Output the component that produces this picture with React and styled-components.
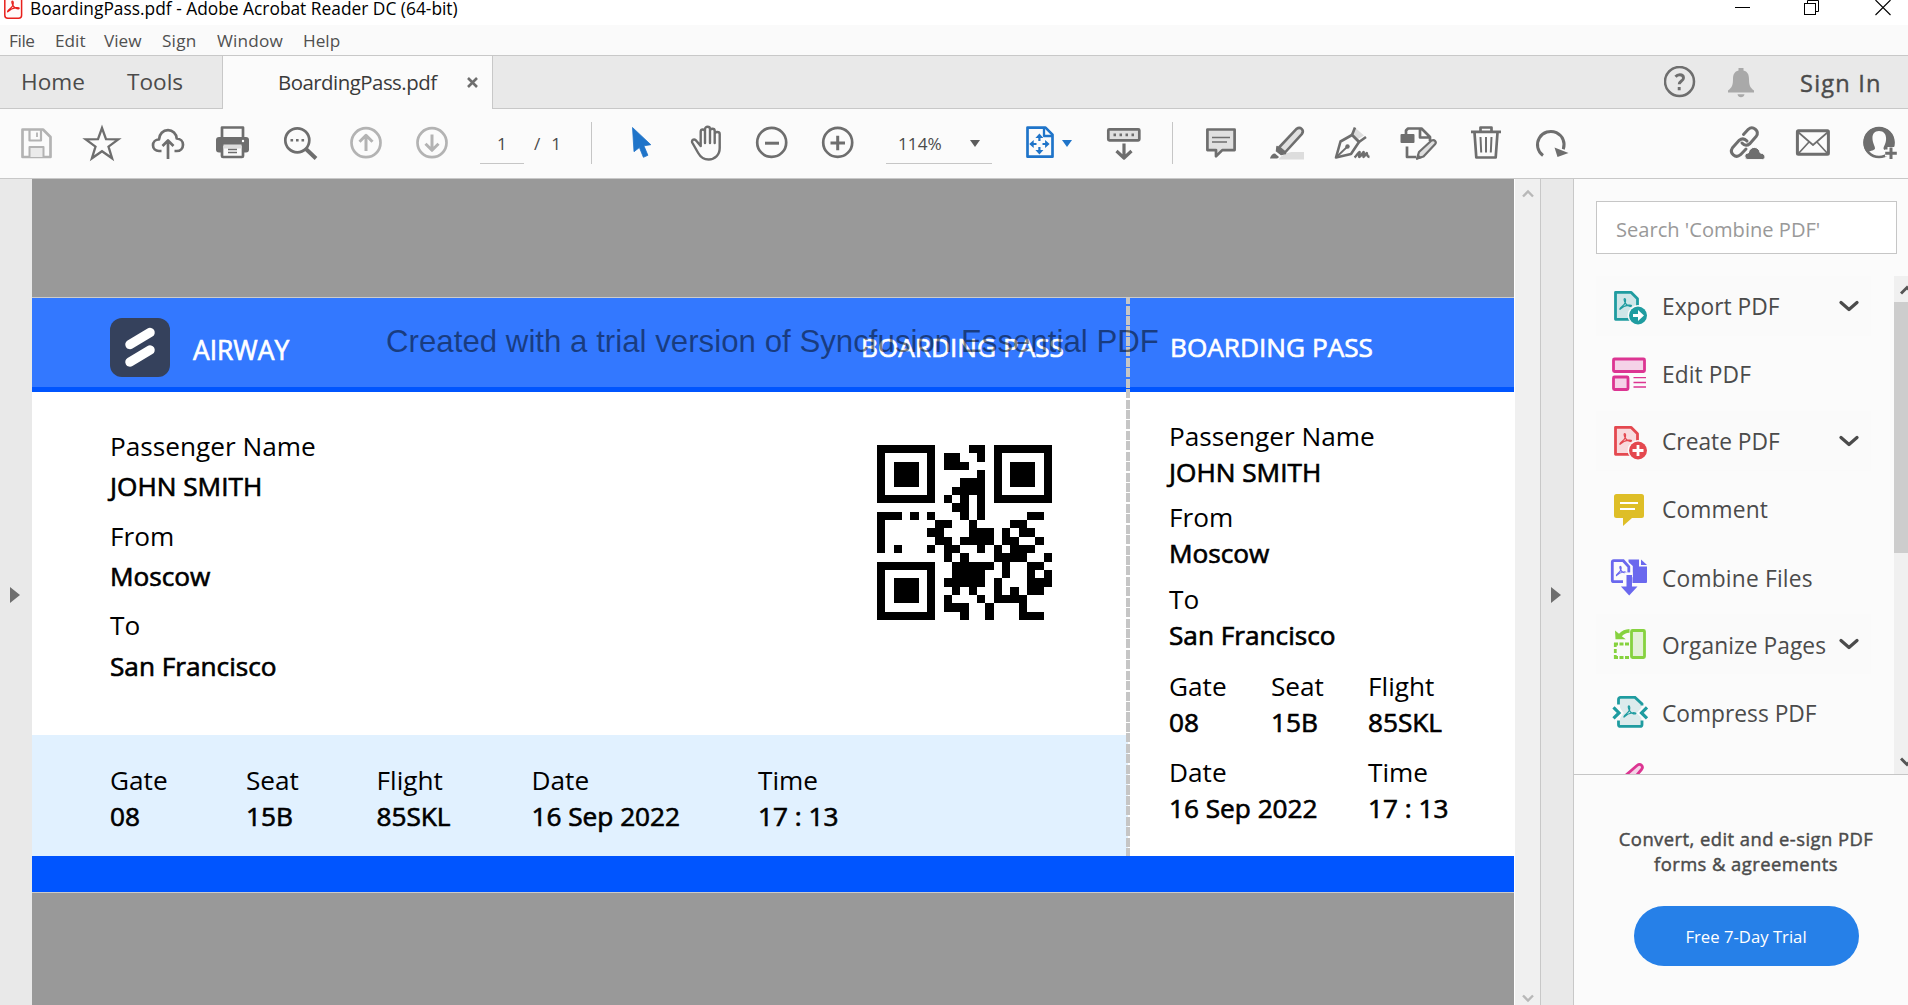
import React from 'react';
import styled, { createGlobalStyle } from 'styled-components';

const Global = createGlobalStyle`
  html, body { margin: 0; padding: 0; overflow: hidden; }
  * { box-sizing: border-box; }
  body { font-family: "Open Sans", "Noto Sans", sans-serif; color: #4b4b4b; background: #fbfbfb; }
  svg { display: block; flex: none; }
`;

const Window = styled.div`
  width: 1908px; height: 1005px; overflow: hidden;
  display: flex; flex-direction: column; background: #fbfbfb;
`;

/* ---------- title + menu ---------- */
const TitleBar = styled.header`
  height: 25px; flex: none; background: #fff; display: flex; align-items: flex-start;
  padding: 0 17px 0 4px;
`;
const TitleText = styled.div`
  margin-left: 7px; font-size: 17.35px; line-height: 16px; color: #000; white-space: nowrap; flex: 1;
`;
const Controls = styled.div`display: flex; gap: 55px;`;
const MenuBar = styled.nav`
  height: 31px; flex: none; background: #fafafa; border-bottom: 1px solid #c8c8c8;
  display: flex; align-items: center; padding-left: 9px; color: #505050;
`;
const MenuItem = styled.span`
  width: ${p => p.$w}px; font-size: 17.2px; line-height: 30px; padding-top: 1px; letter-spacing: ${p => p.$ls || 0}px; white-space: nowrap;
`;

/* ---------- tabs ---------- */
const TabBar = styled.div`
  height: 53px; flex: none; display: flex; background: #e9e9e9;
`;
const TabGroup = styled.div`
  width: 222px; border-bottom: 1px solid #c8c8c8; display: flex; align-items: center; padding-left: 21px;
`;
const TabName = styled.span`
  width: ${p => p.$w}px; font-size: 22.6px; line-height: 50px; padding-bottom: 1px; white-space: nowrap;
`;
const ActiveTab = styled.div`
  width: 271px; background: #fbfbfb; border: solid #c8c8c8; border-width: 0 1px;
  display: flex; align-items: center; padding: 0 14px 1px 55px; justify-content: space-between;
  font-size: 20.4px; letter-spacing: -0.5px; color: #3a3a3a; white-space: nowrap;
`;
const TabRest = styled.div`
  flex: 1; border-bottom: 1px solid #c8c8c8; display: flex; align-items: center; justify-content: flex-end;
  padding-right: 27px;
`;
const SignIn = styled.span`
  width: 82px; margin-left: 45px; padding-left: 1px; font-size: 23.6px; letter-spacing: 1.2px; white-space: nowrap; color: #4b4b4b;
  line-height: 50px; padding-top: 1px; -webkit-text-stroke: 0.4px currentColor;
`;
const BellSlot = styled.div`margin-left: 32px; padding-top: 2px;`;

/* ---------- toolbar ---------- */
const Toolbar = styled.div`
  height: 70px; flex: none; background: #fbfbfb; border-bottom: 1px solid #c8c8c8;
  display: flex; align-items: flex-start; padding: 13px 8px 0 16px; color: #6e6e6e;
`;
const Tool = styled.svg.attrs({ width: 40, height: 40, viewBox: '0 0 40 40', fill: 'none' })`
  margin: 1px 0 0 ${p => p.$ml || 0}px;
  stroke-linejoin: round; color: ${p => p.$c || '#6e6e6e'}; stroke: currentColor; stroke-width: 2.7;
`;
const Field = styled.div`
  width: ${p => p.$w}px; height: 42px; margin-left: ${p => p.$ml}px; border-bottom: 1px solid #c6c6c6;
  display: flex; align-items: center; justify-content: ${p => p.$j || 'center'}; padding: ${p => p.$pad || '2px 0 0'};
  font-size: 17.2px; line-height: 40px; color: #4b4b4b;
`;
const PageTotal = styled.span`
  width: 57px; padding: 1px 0 0 10px; font-size: 17.2px; line-height: 42px; word-spacing: 6.5px; color: #4b4b4b;
`;
const Rule = styled.div`width: 1px; height: 42px; background: #c6c6c6; margin-left: ${p => p.$ml}px;`;
const Caret = styled.span`
  border: solid transparent; border-width: 7px 5px 0; border-top-color: ${p => p.$c}; margin: ${p => p.$m || 0};
`;
const Spacer = styled.div`flex: 1;`;

/* ---------- work area ---------- */
const Work = styled.main`flex: 1; min-height: 0; display: flex;`;
const SideHandle = styled.div`
  width: ${p => p.$w}px; flex: none; background: #e9e9e9; display: flex; align-items: flex-start;
  padding: 408px 0 0 ${p => p.$pl}px;
  border: solid #c8c8c8; border-width: ${p => (p.$lined ? '0 1px' : '0')};
`;
const Triangle = styled.span`border: solid transparent; border-width: 8px 0 8px 10px; border-left-color: #6e6e6e;`;
const DocView = styled.section`
  width: 1482px; flex: none; background: #999; padding-top: 118px; overflow: hidden;
`;
const ScrollTrack = styled.div`
  width: 26px; flex: none; background: #f0f0f0; border-left: 1px solid #fff;
  display: flex; flex-direction: column; justify-content: space-between; align-items: center; padding: 10px 0 2px;
`;

/* ---------- boarding pass ---------- */
const Pass = styled.article`
  position: relative; height: 596px; border: solid #ccc; border-width: 1px 0;
  display: flex; flex-direction: column; background: #fff; color: #000;
`;
const PassHead = styled.div`
  height: 94px; flex: none; background: #3378ff; border-bottom: 5px solid #0055ff; display: flex; align-items: flex-start;
  color: #fff; padding: 20px 0 0 78px;
`;
const Emph = styled.span`
  -webkit-text-stroke: 0.65px currentColor; white-space: nowrap;
`;
const Brand = styled(Emph)`
  width: 691px; padding-left: 23px; font-size: 26.4px; line-height: 65px;
`;
const HeadTitle = styled(Emph)`
  width: ${p => p.$w}px; font-size: 26.2px; line-height: 58px;
`;
const Watermark = styled.div`
  position: absolute; left: 354px; top: 24px; font: 31.25px/40px "Liberation Sans", Arial, sans-serif;
  color: rgba(0, 0, 0, 0.5); white-space: nowrap;
`;
const Perforation = styled.div`
  position: absolute; left: 1094px; top: 0; width: 4px; height: 558px;
  background: repeating-linear-gradient(to bottom, #c6c6c6 0 9.1px, transparent 9.1px 10.43px) 0 -2.8px / 100% 600px no-repeat;
`;
const PassBody = styled.div`flex: 1; min-height: 0; display: flex;`;
const MainPart = styled.div`width: 1096px; display: flex; flex-direction: column;`;
const MainTop = styled.div`
  height: 343px; display: flex; justify-content: space-between; padding: 34px 76px 0 78px;
`;
const Stub = styled.div`flex: 1; padding: 25.7px 0 0 41px;`;
const Group = styled.div`
  width: ${p => p.$w ? p.$w + 'px' : 'auto'};
  margin-bottom: ${p => p.$mb || 0}px; font-size: 26.2px; white-space: nowrap;
`;
const Label = styled.div`line-height: ${p => p.$lh || 36}px;`;
const Value = styled(Emph)`display: block; line-height: ${p => p.$lh || 36}px;`;
const Row = styled.div`display: flex; margin-bottom: ${p => p.$mb || 0}px;`;
const Strip = styled.div`
  flex: 1; background: #e1f1ff; display: flex; padding: 27px 0 0 78px;
`;
const PassFoot = styled.div`height: 36px; flex: none; background: #0055ff;`;
const QrSlot = styled.div`margin-top: 19px;`;

const F = ({ l, v, w, mb, a, b }) => (
  <Group $w={w} $mb={mb}><Label $lh={a}>{l}</Label><Value $lh={b}>{v}</Value></Group>
);

const QR = [
  '111111100001101111111',
  '100000101100101000001',
  '101110101110001011101',
  '101110100000101011101',
  '101110100011101011101',
  '100000100111101000001',
  '111111101010101111111',
  '000000000110100000000',
  '111010100010100000110',
  '100000011001000011000',
  '100000110001110101100',
  '100000011011110110010',
  '101000101100101011100',
  '000000001010001111001',
  '111111100111110100110',
  '100000100111100100101',
  '101110101111101000111',
  '101110100101001010110',
  '101110101000101111000',
  '100000101110010001000',
  '111111100010010001110',
];
const QrCode = () => (
  <svg width="175" height="175" viewBox="0 0 21 21" shapeRendering="crispEdges">
    {QR.map((r, y) => [...r].map((c, x) => c === '1' && <rect key={x + '-' + y} x={x} y={y} width="1" height="1" />))}
  </svg>
);

/* ---------- tools panel ---------- */
const Panel = styled.aside`flex: 1; min-width: 0; display: flex; flex-direction: column; background: #fbfbfb;`;
const Search = styled.div`
  margin: 22px 11px 22px 22px; height: 53px; flex: none; background: #fff; border: 1px solid #c6c6c6;
  padding-left: 19px; font-size: 20.1px; line-height: 55px; color: #999; white-space: nowrap;
`;
const ListArea = styled.div`
  height: 499px; flex: none; display: flex; overflow: hidden; border-bottom: 1px solid #c6c6c6; padding-left: 22px;
`;
const List = styled.div`width: 298px; flex: none; display: flex; flex-direction: column; gap: 7.7px;`;
const Item = styled.div`
  width: 275px; height: 60px; flex: none; display: flex; align-items: center; padding-left: 14px;
  background: ${p => (p.$open ? '#fafafa' : 'transparent')};
  font-size: 22.75px; white-space: nowrap;
`;
const ItemName = styled.span`
  width: 177px; margin-left: 12px; height: 60px; line-height: 60px;
  padding-top: ${p => p.$drop}px; letter-spacing: ${p => p.$ls || 0}px;
`;
const ListScroll = styled.div`width: 14px; flex: none; background: #f0f0f0; display: flex; flex-direction: column; overflow: hidden;`;
const Thumb = styled.div`height: 251px; background: #cdcdcd; margin: 0 0 auto;`;
const ScrollBtn = styled.div`height: 26px; flex: none; padding: ${p => p.$pt}px 0 0 6px;`;
const Promo = styled.div`
  flex: 1; display: flex; flex-direction: column; align-items: center; padding: 51px 4px 0 14px; text-align: center;
`;
const PromoText = styled.p`
  margin: 0; font-size: 18.4px; line-height: 25px; letter-spacing: 0.45px; white-space: pre;
  -webkit-text-stroke: 0.45px currentColor;
`;
const Trial = styled.button`
  margin: 30px 0 0; width: 225px; height: 60px; border: 0; border-radius: 30px; background: #2680e8; color: #fff;
  font: 16.7px/60px "Open Sans", sans-serif; padding: 1px 0 0;
`;

const Ico = ({ children, dy = 0 }) => <svg width="40" height="40" viewBox={`0 ${-dy} 40 40`} fill="none">{children}</svg>;
const A = ({ c, x = 0, y = 0, s = 1 }) => (
  <path transform={`translate(${x} ${y}) scale(${s})`} stroke={c} strokeWidth={1.2 / s} strokeLinejoin="round"
    d="M0.5 11.5C-0.5 10 4.500 8 6 4.500C6.600 2.500 6.500 0 5.500 0S4.800 2.500 6 4.500C7 7 10.500 8.500 12 8.200C13.500 7.500 12 6.800 9.500 7C5 7.500 2.500 9.500 .5 11.500Z" />
);
const PageBadge = ({ c, f, children }) => (
  <Ico>
    <path d="M5.500 6.300h15.500l6.500 6.500v20.500h-22z" fill={f} stroke={c} strokeWidth="2.800" strokeLinejoin="round" />
    <A c={c} x={9.5} y={12.5} s={0.95} />
    <circle cx="28" cy="29.500" r="10.400" fill="#fbfbfb" />
    <circle cx="28" cy="29.500" r="9" fill={c} />
    {children}
  </Ico>
);
const Chevron = () => (
  <svg width="20" height="12" viewBox="0 0 20 12" fill="none" stroke="#4b4b4b" strokeWidth="3.200"><path d="M2 2.500l8 7 8-7" strokeLinecap="round" strokeLinejoin="round" /></svg>
);

const icons = {
  exp: <PageBadge c="#1f9ca0" f="#cfe6e8"><path d="M23 28h5v-4l6 5.500-6 5.500v-4h-5z" fill="#fff" /></PageBadge>,
  edit: <Ico><g stroke="#dc3592" fill="#f5d3e8" strokeWidth="2.800" strokeLinejoin="round"><rect x="3.500" y="5" width="31" height="12.500" rx="1" /><rect x="3.500" y="23" width="14.500" height="12.500" rx="1" /></g><path d="M23.500 23.700H36M23.500 28.500H36M23.500 33H36" stroke="#dc3592" strokeWidth="1.300" /></Ico>,
  create: <PageBadge c="#e4484f" f="#f8dadd"><path d="M28 24v11M22.500 29.500h11" stroke="#fff" strokeWidth="2.800" /></PageBadge>,
  comment: <Ico><path d="M6.500 5h25a2.500 2.500 0 0 1 2.500 2.500v19a2.500 2.500 0 0 1-2.500 2.500h-9.500l-9 8v-8h-6.500a2.500 2.500 0 0 1-2.500-2.500v-19a2.500 2.500 0 0 1 2.500-2.500z" fill="#debe27" /><path d="M10 14h18M10 20h15" stroke="#fff" strokeWidth="2.200" /></Ico>,
  combine: <Ico dy={-1.6}><path d="M18.500 4H29v7h8v15.500a1 1 0 0 1-1 1H18.500z" fill="#6a68ee" /><path d="M31 4l6 5.500h-6z" fill="#6a68ee" /><path d="M12 26.300H4.300a2 2 0 0 1-2-2V6.800a1.500 1.500 0 0 1 1.500-1.500h9.500l7 6.500v10" stroke="#fbfbfb" strokeWidth="5" fill="#fbfbfb" /><path d="M13 26.300H3.800a1.500 1.500 0 0 1-1.500-1.500V6.800a1.500 1.500 0 0 1 1.500-1.500h9.500l5.500 6v8" stroke="#6a68ee" strokeWidth="2.800" fill="#fbfbfb" /><A c="#6a68ee" x={6} y={11} s={0.8} /><path d="M14.500 17h8v18h-8z" fill="#fbfbfb" /><path d="M16.500 19.500h5.500v11.500h5.500l-8.300 9-8.300-9h5.600z" fill="#6a68ee" /></Ico>,
  organize: <Ico><rect x="21.500" y="6.500" width="13" height="27" rx="1" fill="#e3f1d6" stroke="#86d23f" strokeWidth="2.800" /><path d="M5 6.500l4 3.200c3-3 6-4.500 10.500-4.700v3.800c-3.500.3-5.500 1.200-7.700 3.500l4 3H5.500z" fill="#86d23f" /><path d="M4 20h15M4 33.500h15" stroke="#86d23f" strokeWidth="2.800" strokeDasharray="4 1.500" /><path d="M5.300 19v16" stroke="#86d23f" strokeWidth="2.800" strokeDasharray="4 2" /></Ico>,
  compress: <Ico dy={0.4}><path d="M10 6.500h14.500l7 6v20h-21.500V26l3-5.500-3-5.500z" fill="#dcebec" /><path d="M8.500 12V7a2 2 0 0 1 2-2h14.500l7 6.500v1.500M8.500 28v4a2 2 0 0 0 2 2h19.500a2 2 0 0 0 2-2v-4" stroke="#1f9ca0" strokeWidth="2.800" /><path d="M3.500 15l5.500 5.500L3.500 26M37 15l-5.500 5.500L37 26" stroke="#fbfbfb" strokeWidth="7" /><path d="M3.500 15l5.500 5.500L3.500 26M37 15l-5.500 5.500L37 26" stroke="#1f9ca0" strokeWidth="3.200" /><A c="#1f9ca0" x={13.5} y={13.5} s={0.98} /></Ico>,
  redact: <Ico><path d="M15.500 15.500l11.500-10c3.500-2.800 7 .8 4.500 4L21 22z" fill="#f5d3e8" stroke="#dc3592" strokeWidth="2.800" /></Ico>,
};
const items = [
  { k: 'exp', name: 'Export PDF', open: true, drop: 1 },
  { k: 'edit', name: 'Edit PDF', drop: 1, ls: 0.1 },
  { k: 'create', name: 'Create PDF', open: true, drop: 1 },
  { k: 'comment', name: 'Comment', drop: 1, ls: 0.15 },
  { k: 'combine', name: 'Combine Files', drop: 2, ls: 0.2 },
  { k: 'organize', name: 'Organize Pages', open: true, drop: 2, ls: 0.05 },
  { k: 'compress', name: 'Compress PDF', drop: 2 },
  { k: 'redact', name: 'Redact', drop: 4 },
];

export default function App() {
  return (
    <Window>
      <Global />
      <TitleBar>
        <svg width="19" height="20" viewBox="0 0 19 20" fill="none" stroke="#e8201c">
          <rect x="0.8" y="-3" width="16.800" height="21.200" rx="3" strokeWidth="1.500" fill="#fffafa" />
          <A c="#e8201c" x={3.2} y={1} s={0.95} />
        </svg>
        <TitleText>BoardingPass.pdf - Adobe Acrobat Reader DC (64-bit)</TitleText>
        <Controls>
          <svg width="15" height="16" viewBox="0 0 15 16" overflow="visible"><rect x="1" y="7" width="15" height="1" /></svg>
          <svg width="16" height="16" viewBox="0 0 16 16" fill="none" stroke="#000"><rect x="0.500" y="3.500" width="11" height="11" /><path d="M3.500 3V.5h11v11H12" /></svg>
          <svg width="16" height="16" viewBox="0 0 16 16" stroke="#000" strokeWidth="1.100"><path d="M.5 0l15 15M15.500 0l-15 15" /></svg>
        </Controls>
      </TitleBar>
      <MenuBar>
        <MenuItem $w={46} $ls={-0.4}>File</MenuItem><MenuItem $w={49}>Edit</MenuItem><MenuItem $w={58}>View</MenuItem>
        <MenuItem $w={55} $ls={0.2}>Sign</MenuItem><MenuItem $w={86} $ls={0.2}>Window</MenuItem><MenuItem $w={50}>Help</MenuItem>
      </MenuBar>
      <TabBar>
        <TabGroup><TabName $w={106}>Home</TabName><TabName $w={80}>Tools</TabName></TabGroup>
        <ActiveTab>
          BoardingPass.pdf
          <svg width="11" height="11" viewBox="0 0 11 11" stroke="#6e6e6e" strokeWidth="2.600"><path d="M1 1l9 9M10 1l-9 9" /></svg>
        </ActiveTab>
        <TabRest>
          <svg width="32" height="32" viewBox="0 0 32 32" fill="none" stroke="#6e6e6e" strokeWidth="2.500">
            <circle cx="15.500" cy="15.500" r="14.500" />
            <path d="M11.500 10.800c1.500-1.800 3-2 4.300-2 2.200 0 3.700 1.300 3.700 3.100 0 3.100-4.300 3.100-4.300 6.400M15.200 21v3.200" strokeWidth="2.900" />
          </svg>
          <BellSlot>
            <svg width="26" height="30" viewBox="0 0 26 30" fill="#a9a9a9">
              <path d="M10.500 0h5v2.500c4 1 5.500 4 5.500 8.500 0 6 1 8.500 5 11.500v2H0v-2c4-3 5-5.500 5-11.500 0-4.500 1.500-7.500 5.500-8.500zM9.500 26.300h7c-.3 1.800-1.700 2.900-3.500 2.900s-3.200-1.100-3.500-2.900z" />
            </svg>
          </BellSlot>
          <SignIn>Sign In</SignIn>
        </TabRest>
      </TabBar>

      <Toolbar>
        <Tool $c="#b3b3b3"><path d="M6.500 6.500H27l7.500 7.500v20H6.500z" /><path d="M13.500 7v10.500h11.500V7" strokeWidth="2.200" /><path d="M13.500 34V24h14v10" fill="#ebebeb" strokeWidth="2" /><path d="M21 9.500v4.500" strokeWidth="1.800" /></Tool>
        <Tool $ml={26}><path d="M20 5.500l4 11.200 12.300.2-9.800 7.300 3.600 11.600L20 28.700l-10.100 7.100 3.600-11.600-9.800-7.300 12.300-.2z" transform="translate(0 -.5)" strokeWidth="2.300" strokeLinejoin="miter" /></Tool>
        <Tool $ml={26}><path d="M13.500 28h-2.500c-3.500 0-6-2.500-6-5.700 0-3.300 2.500-5.800 6-5.800.3-5.500 4-9.300 9-9.300 4.700 0 8.300 3.500 8.700 8.300 3.700.2 6.300 2.700 6.300 6.200 0 3.600-2.700 6.300-6.300 6.300h-2.200" /><path d="M20 36V18M14.500 23l5.500-5.500 5.500 5.500" /></Tool>
        <Tool $ml={25}>
          <rect x="3" y="14" width="33" height="15.500" rx="3" fill="currentColor" stroke="none" />
          <path d="M9 14V4.500h21V14" /><rect x="9" y="21.500" width="21" height="12.500" rx="1" fill="#fbfbfb" /><rect x="10.500" y="21.500" width="18" height="4" fill="#ddd" stroke="none" />
          <path d="M15 26.500h9M15 29.500h9" strokeWidth="1.500" /><circle cx="30" cy="18" r="1.200" fill="#fff" stroke="none" />
        </Tool>
        <Tool $ml={28}><circle cx="16.300" cy="17.300" r="12" /><path d="M25 26l10 9.500" strokeWidth="4" /><path d="M9.500 17.300h2.600M15 17.300h2.600M20.500 17.300h2.600" strokeWidth="2.600" /></Tool>
        <Tool $ml={25} $c="#b3b3b3"><circle cx="20" cy="19.700" r="14.500" /><path d="M20 28V12.500M13.500 18.800l6.500-6.500 6.500 6.500" strokeWidth="3" /></Tool>
        <Tool $ml={26} $c="#b3b3b3"><circle cx="20" cy="19.700" r="14.500" /><path d="M20 11.500V27M13.500 20.800l6.500 6.500 6.500-6.500" strokeWidth="3" /></Tool>
        <Field $w={44} $ml={28}>1</Field>
        <PageTotal>/ 1</PageTotal>
        <Rule $ml={10} />
        <Tool $ml={30} $c="#1f74c9"><path d="M11 5l18.300 17.200-6.900 1.100 4 9.500-4.500 2-4-9.800-5.400 4.200z" transform="translate(-.5 -.5)" fill="currentColor" stroke="currentColor" strokeWidth="0.800" /></Tool>
        <Tool $ml={24} strokeLinecap="round"><path d="M12.500 23V8.800c0-3 4.300-3 4.300 0V20M16.800 8V6c0-3 5-3 5 0v14M21.800 8c0-3 4.700-3 4.700 0v12M26.500 11c0-2.600 5-2.600 5 0v14c0 7-5 11.500-11 11.500-5 0-8-2-10.500-6.500l-6-10.500c-1-3 2.500-4 4.300-1.500l4.200 5" transform="translate(2.200 0)" strokeWidth="2.400" /></Tool>
        <Tool $ml={26}><circle cx="19.700" cy="19.400" r="14.500" /><path d="M13 20.200h14" strokeWidth="3" /></Tool>
        <Tool $ml={26}><circle cx="19.700" cy="19.400" r="14.500" /><path d="M12.500 20h14.500M19.700 12.800v14.500" strokeWidth="3" /></Tool>
        <Field $w={106} $ml={28} $j="space-between" $pad="2px 12px 0 12px">114%<Caret $c="#5c5c5c" /></Field>
        <Tool $ml={28} $c="#1f74c9">
          <path d="M7.500 4.600H25.500l7 7V33.700H7.500z" /><path d="M24 5v8h8" strokeWidth="2.300" />
          <path d="M19.400 13.500v4.500M19.400 24v4.500M12 21h4.500M22.500 21h4.500" strokeWidth="2.200" />
          <path d="M19.400 10.500l4 4.500h-8zM19.400 31.500l4-4.500h-8zM9.200 21l4.500-4v8zM29.600 21l-4.500-4v8z" fill="currentColor" stroke="none" />
        </Tool>
        <Caret $c="#1f74c9" $m="18px 0 0 2px" />
        <Tool $ml={32}><rect x="4.300" y="6.300" width="31" height="11" rx="1" fill="#e0e0e0" /><path d="M9.500 11.800h2.500M15.500 11.800h2.500M21.500 11.800h2.500M27.500 11.800h2.500" strokeWidth="2.800" /><path d="M20 20.500v14M12.500 28l7.500 7 7.500-7" strokeWidth="3.200" /></Tool>
        <Rule $ml={28} />
        <Tool $ml={28}><path d="M6.400 6.500h27.200v20.600H21.300l-6.300 6.200v-6.200H6.400z" fill="#e0e0e0" /><path d="M11 14.500h18M11 19h15" strokeWidth="1.500" /></Tool>
        <Tool $ml={26}><path d="M11.500 36.500c3-5 10-7.500 14.500-7.500h11v7.500z" fill="#ddd" stroke="none" /><path d="M12 24.500L29.500 5.800c4-2.500 8 1 5.500 5L18 29.500z" fill="#e0e0e0" strokeWidth="2.600" /><path d="M10 23.500l8.500 7-4.500 1-4.500-3.500z" fill="currentColor" strokeWidth="1.500" /><path d="M3 35.500c.5-3 2.500-5 5-5l4 3.500c-1 1.500-1.500 1.500-3 1.500z" fill="currentColor" stroke="none" /></Tool>
        <Tool $ml={25}><path d="M23.500 5l8.500 7.500-6 3.500-5.500-5z" fill="#ddd" stroke="none" /><path d="M23 4.500L20 12l7 7 7-5" strokeWidth="2.600" /><path d="M20 12L8.500 18.500 4 34.500l15-3.500 8-12z" fill="#fbfbfb" strokeWidth="2.600" /><path d="M4.500 34L15 24" strokeWidth="1.800" /><circle cx="15.500" cy="23.500" r="2.200" fill="currentColor" stroke="none" /><path d="M22.500 34.500c2-1.500 4-5.500 5-5.500s-1.500 5 0 5 3-5 4-5-1 5 .2 5 2-4 3-4-.8 3.500 2.800 4" strokeWidth="2.300" /></Tool>
        <Tool $ml={27}><rect x="1.500" y="11" width="14" height="9" rx="1" fill="currentColor" stroke="none" /><path d="M7 11V7.500L9 5.500h13.500l8.500 8.500v4M21 6v8.500h9.500M8 23.500V34h9" /><path d="M18 35.500l2-6.500L32.500 17.500c3-1.500 5.500 1.500 3.500 3.800L24.500 33.500z" fill="#e0e0e0" strokeWidth="2.200" /><path d="M17 37l2-6 4 4z" fill="currentColor" stroke="none" /></Tool>
        <Tool $ml={27}><path d="M5 8.800h30M14.500 8V4.500h11V8M8.500 9.500l1.800 25h19.400l1.800-25" /><path d="M14.500 14l.7 15.500M20 14v15.500M25.500 14l-.7 15.500" strokeWidth="2" /></Tool>
        <Tool $ml={25}><path d="M12 32.300A13.300 13.300 0 1 1 32.300 26" transform="translate(0 .2)" strokeWidth="3" /><path d="M23.500 24.500l14 5.500-11 4z" fill="currentColor" stroke="none" /></Tool>
        <Spacer />
        <Tool strokeLinecap="round">
          <g strokeWidth="3"><path d="M17.500 11.500l4.800-5.200c4.500-4 11.500 1.500 8 7L24 20.500c-3 2.600-6 1.800-8-.5" /><path d="M20 26l-5.500 5.700c-5 4.300-11.500-1.500-8-7L13 17.500c3-2.500 6-1.700 8 .6" /></g>
          <path d="M20 37.500c-4-1-3.500-6.500.8-6.500 1.500-7.500 10.500-7.500 12 0 5.500.5 6 5.500 2.700 6.500z" transform="translate(1.500 -1)" fill="currentColor" stroke="#fbfbfb" strokeWidth="1" />
        </Tool>
        <Tool $ml={27}><rect x="4.400" y="7.800" width="31" height="23.500" rx="1" strokeWidth="3" /><path d="M5 9l15 13L35 9M5 31l11-12M35 31L24 19" strokeWidth="1.700" /></Tool>
        <Tool $ml={27}>
          <circle cx="19" cy="19.500" r="14.500" strokeWidth="2.500" /><path d="M19 8c-6 0-7.500 5-6 11 .8 3 2 4.500 2 6.500 0 1.500-4 2.200-8 4A15.500 15.500 0 1 1 30.500 30c-3.500-2-7-3-7-4.500 0-2 1.500-3.500 2.200-6.500C27 13 25 8 19 8z" fill="currentColor" stroke="none" />
          <path d="M31 24v12M25 30h12" stroke="#fbfbfb" strokeWidth="7" /><path d="M31 24.500v11.500M25.200 30.300h11.600" strokeWidth="3" />
        </Tool>
      </Toolbar>

      <Work>
        <SideHandle $w={32} $pl={10}><Triangle /></SideHandle>
        <DocView>
          <Pass>
            <PassHead>
              <svg width="60" height="59" viewBox="0 0 60 59"><rect width="60" height="59" rx="12" fill="#35415c" /><path d="M20 26.500L40 14.500M20 44L40 32" stroke="#fff" strokeWidth="9.500" strokeLinecap="round" /></svg>
              <Brand>AIRWAY</Brand>
              <HeadTitle $w={309}>BOARDING PASS</HeadTitle>
              <HeadTitle>BOARDING PASS</HeadTitle>
            </PassHead>
            <PassBody>
              <MainPart>
                <MainTop>
                  <div>
                    <F l="Passenger Name" v="JOHN SMITH" mb={8} a={40} b={41.5} />
                    <F l="From" v="Moscow" mb={8} a={40} b={41.5} />
                    <F l="To" v="San Francisco" a={40} b={42} />
                  </div>
                  <QrSlot><QrCode /></QrSlot>
                </MainTop>
                <Strip>
                  <F l="Gate" v="08" w={136} /><F l="Seat" v="15B" w={130.5} /><F l="Flight" v="85SKL" w={155} />
                  <F l="Date" v="16 Sep 2022" w={226.5} /><F l="Time" v="17 : 13" />
                </Strip>
              </MainPart>
              <Stub>
                <F l="Passenger Name" v="JOHN SMITH" mb={9.5} />
                <F l="From" v="Moscow" mb={9.5} />
                <F l="To" v="San Francisco" mb={15} />
                <Row $mb={14}><F l="Gate" v="08" w={102} /><F l="Seat" v="15B" w={97} /><F l="Flight" v="85SKL" /></Row>
                <Row><F l="Date" v="16 Sep 2022" w={199} /><F l="Time" v="17 : 13" /></Row>
              </Stub>
            </PassBody>
            <PassFoot />
            <Perforation />
            <Watermark>Created with a trial version of Syncfusion Essential PDF</Watermark>
          </Pass>
        </DocView>
        <ScrollTrack>
          <svg width="12" height="9" viewBox="0 0 12 9" fill="none" stroke="#b8b8b8" strokeWidth="2.400"><path d="M1 7.500l5-5 5 5" /></svg>
          <svg width="12" height="9" viewBox="0 0 12 9" fill="none" stroke="#b8b8b8" strokeWidth="2.400"><path d="M1 1.500l5 5 5-5" /></svg>
        </ScrollTrack>
        <SideHandle $w={34} $pl={10} $lined><Triangle /></SideHandle>
        <Panel>
          <Search>Search 'Combine PDF'</Search>
          <ListArea>
            <List>
              {items.map(({ k, name, open, drop, ls }) => (
                <Item key={k} $open={open}>{icons[k]}<ItemName $ls={ls} $drop={drop}>{name}</ItemName>{open && <Chevron />}</Item>
              ))}
            </List>
            <ListScroll>
              <ScrollBtn $pt={9}><svg width="14" height="10" viewBox="0 0 14 10" fill="none" stroke="#555" strokeWidth="3"><path d="M1 8.500l6-6 6 6" /></svg></ScrollBtn>
              <Thumb />
              <ScrollBtn $pt={9}><svg width="14" height="10" viewBox="0 0 14 10" fill="none" stroke="#555" strokeWidth="3"><path d="M1 1.500l6 6 6-6" /></svg></ScrollBtn>
            </ListScroll>
          </ListArea>
          <Promo>
            <PromoText>{'Convert, edit and e-sign PDF\nforms & agreements'}</PromoText>
            <Trial>Free 7-Day Trial</Trial>
          </Promo>
        </Panel>
      </Work>
    </Window>
  );
}
